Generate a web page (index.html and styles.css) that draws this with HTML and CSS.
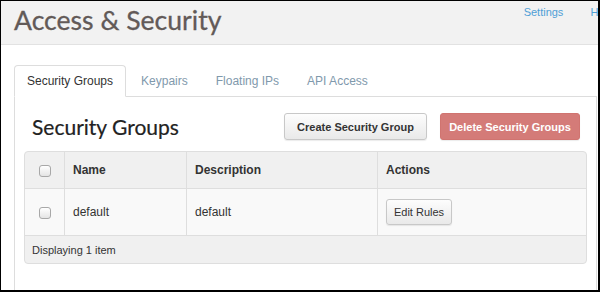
FILE: index.html
```html
<!DOCTYPE html>
<html lang="en">
<head>
  <meta charset="UTF-8" />
  <title>Access &amp; Security</title>
  <link rel="stylesheet" href="styles.css">
</head>
<body>
  <div class="frame">
    <header class="page-header">
      <h1>Access &amp; Security</h1>
      <nav class="user-nav">
        <a href="#">Settings</a>
        <a href="#">Help</a>
      </nav>
    </header>

    <div class="tabs-wrap">
      <ul class="tabs">
        <li class="active"><a href="#">Security Groups</a></li>
        <li><a href="#">Keypairs</a></li>
        <li><a href="#">Floating IPs</a></li>
        <li><a href="#">API Access</a></li>
      </ul>

      <div class="tab-pane">
        <div class="table-head">
          <h2>Security Groups</h2>
          <div class="table-actions">
            <button class="btn">Create Security Group</button>
            <button class="btn btn-danger">Delete Security Groups</button>
          </div>
        </div>

        <table class="data-table">
          <thead>
            <tr>
              <th class="col-check"><span class="checkbox"></span></th>
              <th class="col-name">Name</th>
              <th class="col-desc">Description</th>
              <th class="col-actions">Actions</th>
            </tr>
          </thead>
          <tbody>
            <tr>
              <td class="col-check"><span class="checkbox"></span></td>
              <td>default</td>
              <td>default</td>
              <td><button class="btn btn-small">Edit Rules</button></td>
            </tr>
          </tbody>
          <tfoot>
            <tr>
              <td colspan="4">Displaying 1 item</td>
            </tr>
          </tfoot>
        </table>
      </div>
    </div>
  </div>
</body>
</html>
```

FILE: styles.css
```css
html, body {
  margin: 0;
  padding: 0;
  background: #fff;
  font-family: 'Liberation Sans', Arial, sans-serif;
  color: #333;
}
.frame {
  width: 600px;
  height: 292px;
  box-sizing: border-box;
  border-style: solid;
  border-color: #000;
  border-width: 1px 2px 2px 1px;
  overflow: hidden;
  display: flex;
  flex-direction: column;
}
.page-header {
  display: flex;
  align-items: flex-start;
  height: 43px;
  background: #f2f2f2;
  border-bottom: 1px solid #e2e2e2;
  padding-left: 13px;
  flex-shrink: 0;
}
.page-header h1 {
  margin: 0;
  font-family: Lato, sans-serif;
  font-weight: 400;
  font-size: 26.6px;
  line-height: 38px;
  color: #625a58;
  -webkit-text-stroke: 0.3px #625a58;
}
.user-nav {
  margin-left: auto;
  margin-right: -15px;
  display: flex;
  gap: 27px;
  padding-top: 5px;
}
.user-nav a {
  font-size: 11px;
  color: #4f9fd6;
  text-decoration: none;
}
.tabs-wrap {
  margin: 20px 1px 0 13px;
  flex: 1;
  display: flex;
  flex-direction: column;
}
.tabs {
  list-style: none;
  margin: 0;
  padding: 0;
  display: flex;
  border-bottom: 1px solid #ddd;
}
.tabs li {
  margin-right: 2px;
  margin-bottom: -1px;
  border: 1px solid transparent;
  border-radius: 4px 4px 0 0;
}
.tabs li a {
  display: block;
  padding: 0 12px;
  line-height: 30px;
  font-size: 12px;
  color: #7f99ac;
  text-decoration: none;
}
.tabs li.active {
  border-color: #ddd;
  border-bottom-color: #fff;
  background: #fff;
}
.tabs li.active a {
  color: #333;
}
.tab-pane {
  flex: 1;
  border-left: 1px solid #ddd;
  border-right: 1px solid #ddd;
  padding: 16px 9px 0 9px;
}
.table-head {
  display: flex;
  align-items: center;
  padding: 0 7px 0 8px;
  margin-bottom: 11px;
}
.table-head h2 {
  margin: 0;
  font-family: Lato, sans-serif;
  font-weight: 400;
  font-size: 21px;
  color: #222;
  -webkit-text-stroke: 0.2px #222;
}
.table-actions {
  margin-left: auto;
  display: flex;
  gap: 13px;
}
.btn {
  font-family: 'Liberation Sans', Arial, sans-serif;
  font-size: 11px;
  font-weight: bold;
  color: #333;
  height: 27px;
  padding: 0 20px;
  border: 1px solid #c8c8c8;
  border-radius: 3px;
  background: linear-gradient(#fdfdfd, #e9e9e9);
  box-shadow: 0 1px 1px rgba(0, 0, 0, 0.08);
}
.table-actions .btn {
  width: 143px;
  padding: 0;
}
.table-actions .btn-danger {
  width: 140px;
  color: #fff;
  background: #d47b78;
  border-color: #d07470;
}
.btn-small {
  width: 66px;
  height: 26px;
  padding: 0;
  font-weight: normal;
  color: #333;
}
.data-table {
  width: 100%;
  border-collapse: separate;
  border-spacing: 0;
  border: 1px solid #dedede;
  border-radius: 4px;
  font-size: 12px;
  background: #f0f0f0;
}
.data-table th,
.data-table td {
  text-align: left;
  padding: 0 8px;
  border-left: 1px solid #dedede;
}
.data-table th:first-child,
.data-table td:first-child {
  border-left: none;
}
.data-table thead th {
  height: 36px;
  font-weight: bold;
  border-bottom: 1px solid #dedede;
}
.data-table tbody td {
  height: 46px;
  background: #f9f9f9;
  border-bottom: 1px solid #dedede;
}
.data-table tfoot td {
  height: 27px;
  font-size: 11px;
  padding-left: 7px;
}
.data-table .col-check {
  width: 39px;
  padding: 0;
  text-align: center;
}
.data-table .col-name { width: 105px; }
.data-table .col-desc { width: 174px; }
.checkbox {
  display: inline-block;
  width: 10px;
  height: 10px;
  border: 1px solid #a8a8a8;
  border-radius: 3px;
  background: linear-gradient(#fff, #e4e4e4);
  vertical-align: middle;
  margin-left: 1px;
}
```
